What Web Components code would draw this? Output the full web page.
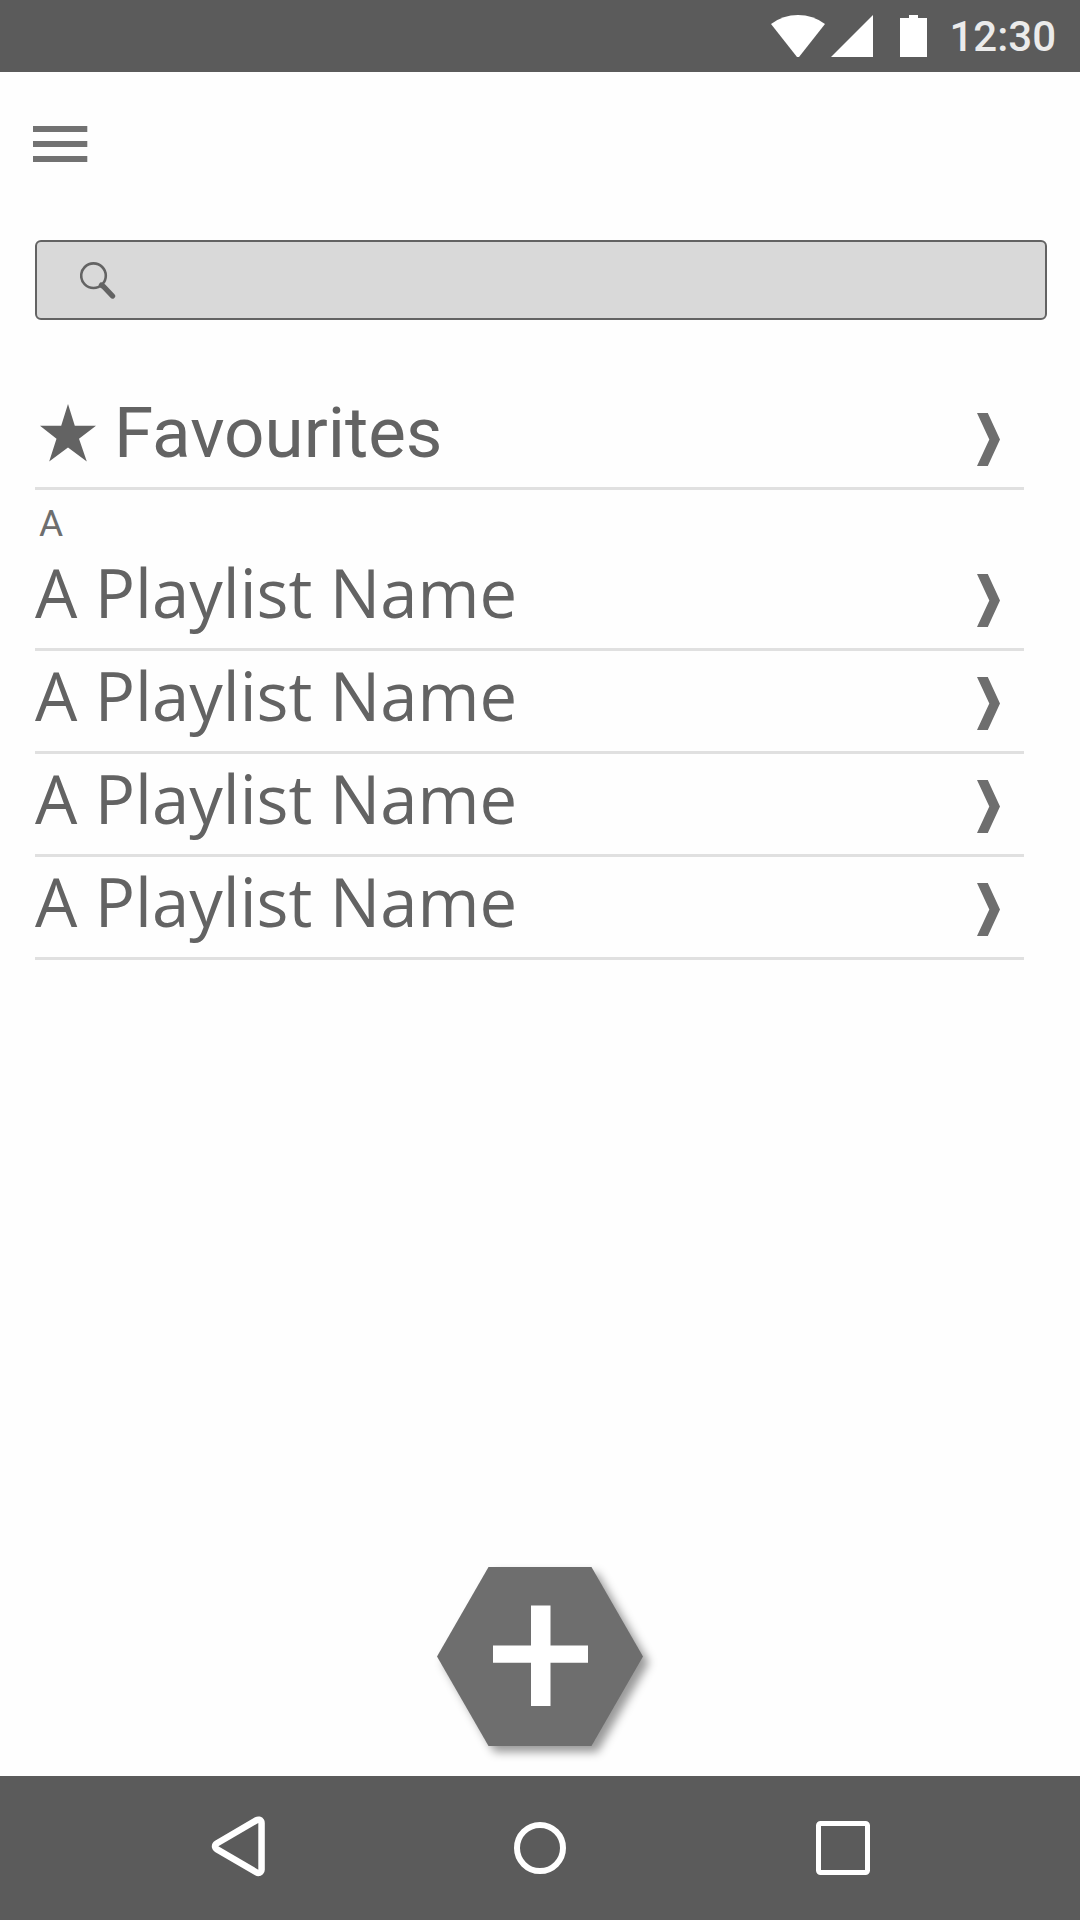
<!DOCTYPE html>
<html lang="en">
<head>
<meta charset="utf-8">
<meta name="viewport" content="width=device-width, initial-scale=1">
<title>Playlists</title>
<style>
  body { margin: 0; background: #fefefe; }
</style>
</head>
<body>
<playlist-app>
  <status-bar slot="status">12:30</status-bar>
  <tool-bar slot="top"></tool-bar>
  <search-box slot="top"></search-box>
  <list-row starred>Favourites</list-row>
  <list-group heading="A">
    <list-row>A Playlist Name</list-row>
    <list-row>A Playlist Name</list-row>
    <list-row>A Playlist Name</list-row>
    <list-row>A Playlist Name</list-row>
  </list-group>
  <add-button slot="action"></add-button>
  <nav-bar slot="nav"></nav-bar>
</playlist-app>

<script>
const define = (name, html) => {
  const template = document.createElement('template');
  template.innerHTML = html;
  customElements.define(name, class extends HTMLElement {
    constructor() {
      super();
      this.attachShadow({ mode: 'open' }).append(template.content.cloneNode(true));
    }
    connectedCallback() {
      const heading = this.shadowRoot.querySelector('[data-heading]');
      if (heading) heading.textContent = this.getAttribute('heading');
    }
  });
};

define('playlist-app', `
  <style>
    :host {
      --bar: #5b5b5b; --ink: #636363; --icon: #6e6e6e; --line: #e0e0e0;
      display: flex; flex-direction: column; min-height: 100vh;
      font-family: Roboto, sans-serif; color: var(--ink);
    }
    main { flex: 1; display: flex; flex-direction: column; }
    .list { padding: 67px 56px 0 35px; }
    .action { margin-top: auto; padding-bottom: 30px; display: flex; justify-content: center; }
  </style>
  <slot name="status"></slot>
  <main>
    <slot name="top"></slot>
    <div class="list"><slot></slot></div>
    <div class="action"><slot name="action"></slot></div>
  </main>
  <slot name="nav"></slot>`);

define('status-bar', `
  <style>
    :host {
      display: flex; align-items: center; justify-content: flex-end; height: 72px;
      padding-right: 24px; background: var(--bar); color: #ebebeb;
      font-size: 42px; font-weight: 500; line-height: 50px;
    }
    svg { display: block; fill: #fff; }
    time { padding-top: 2px; }
    .wifi { margin-right: 6px; }
    .signal { margin-right: 27px; }
    .battery { margin-right: 22px; }
  </style>
  <svg class="wifi" width="54" height="42" viewBox="0 0 54 42" aria-hidden="true"><path d="M0 9Q12 0 27 0T54 9L28 42H26Z"/></svg>
  <svg class="signal" width="42" height="42" viewBox="0 0 42 42" aria-hidden="true"><path d="M42 0V42H0Z"/></svg>
  <svg class="battery" width="27" height="42" viewBox="0 0 27 42" aria-hidden="true"><path d="M9 0H18V3H27V42H0V3H9Z"/></svg>
  <time><slot></slot></time>`);

define('tool-bar', `
  <style>
    :host { display: flex; align-items: center; height: 144px; padding-left: 33px; }
    button { padding: 0; border: 0; background: none; }
    svg { display: block; fill: #727272; }
  </style>
  <button type="button" aria-label="Menu">
    <svg width="55" height="36" viewBox="0 0 55 36" aria-hidden="true"><path d="M0 0H54.3V6H0ZM0 15H54.3V21H0ZM0 30H54.3V36H0Z"/></svg>
  </button>`);

define('search-box', `
  <style>
    :host { display: block; padding: 24px 33px 0 35px; }
    label {
      display: flex; align-items: center; height: 80px; box-sizing: border-box;
      padding-left: 43px; gap: 16px; border: 2px solid var(--ink); border-radius: 6px; background: #d9d9d9;
    }
    svg { display: block; fill: none; stroke: var(--ink); }
    input { flex: 1; min-width: 0; height: 60px; border: 0; outline: 0; background: none; font: 36px Roboto, sans-serif; color: var(--ink); }
  </style>
  <label>
    <svg width="36" height="38" viewBox="0 0 36 38" aria-hidden="true">
      <circle cx="13.5" cy="14.7" r="12.3" stroke-width="2.6"/>
      <path d="M21.5 24.2L23.5 25.5L32.5 35" stroke-width="5.4" stroke-linecap="round"/>
    </svg>
    <input type="search" aria-label="Search playlists">
  </label>`);

define('list-group', `
  <style>
    :host { display: block; }
    h2 { margin: 0; padding: 10px 0 0 4px; font-size: 37px; font-weight: 400; line-height: 48px; color: var(--icon); }
  </style>
  <h2 data-heading></h2>
  <slot></slot>`);

define('list-row', `
  <style>
    :host { display: block; }
    a {
      display: flex; align-items: flex-end; justify-content: space-between; height: 103px; box-sizing: border-box;
      padding: 0 24px 21px 0; border-bottom: 3px solid var(--line);
      color: inherit; text-decoration: none;
    }
    .label { display: flex; align-items: center; gap: 18px; font: 67px/70px "Open Sans", sans-serif; }
    .star { display: none; margin-left: 5px; fill: var(--ink); }
    :host([starred]) .star { display: block; }
    :host([starred]) .label { font: 71px/66px Roboto, sans-serif; }
    .chevron { display: block; fill: var(--icon); }
  </style>
  <a href="#">
    <span class="label">
      <svg class="star" width="56" height="58" viewBox="0 0 56 58" aria-hidden="true"><path d="M28 0L34.8 21.8H56L39 34.7L46.8 57.5L28 43.6L9.2 57.5L16.5 34.7L0 21.8H21.2Z"/></svg>
      <span><slot></slot></span>
    </span>
    <svg class="chevron" width="23" height="53" viewBox="0 0 23 53" aria-hidden="true"><path d="M0 0H10.8L23 26.5L10.8 53H0L12.3 26.5Z"/></svg>
  </a>`);

define('add-button', `
  <style>
    :host { display: block; }
    button { display: block; padding: 0; border: 0; background: none; }
    svg { display: block; overflow: visible; }
    .hexagon { fill: var(--icon); filter: drop-shadow(6px 6px 5px rgba(0, 0, 0, 0.4)); }
  </style>
  <button type="button" aria-label="Add playlist">
    <svg width="206" height="179" viewBox="0 0 206 179" aria-hidden="true">
      <path class="hexagon" d="M0 89.5L51.5 0H154.5L206 89.5L154.5 179H51.5Z"/>
      <path fill="#fff" d="M94 38.5H113.5V78.5H151V95.7H113.5V139H94V95.7H56V78.5H94Z"/>
    </svg>
  </button>`);

define('nav-bar', `
  <style>
    :host { display: block; background: var(--bar); }
    nav { display: flex; align-items: center; justify-content: space-between; height: 144px; padding: 0 210px; }
    button { padding: 0; border: 0; background: none; }
    svg { display: block; fill: none; stroke: #fff; overflow: visible; }
  </style>
  <nav>
    <button type="button" aria-label="Back">
      <svg width="54" height="64" viewBox="0 0 54 64" aria-hidden="true"><path d="M8.3 30.3L48.3 6.9V53.7Z" fill="#5b5b5b" stroke-width="13" stroke-linejoin="round" paint-order="stroke"/></svg>
    </button>
    <button type="button" aria-label="Home">
      <svg width="54" height="54" viewBox="0 0 54 54" aria-hidden="true"><circle cx="27" cy="27" r="23" stroke-width="6"/></svg>
    </button>
    <button type="button" aria-label="Recent apps">
      <svg width="54" height="54" viewBox="0 0 54 54" aria-hidden="true"><rect x="2.5" y="2.5" width="49" height="49" rx="2" stroke-width="5"/></svg>
    </button>
  </nav>`);
</script>
</body>
</html>
